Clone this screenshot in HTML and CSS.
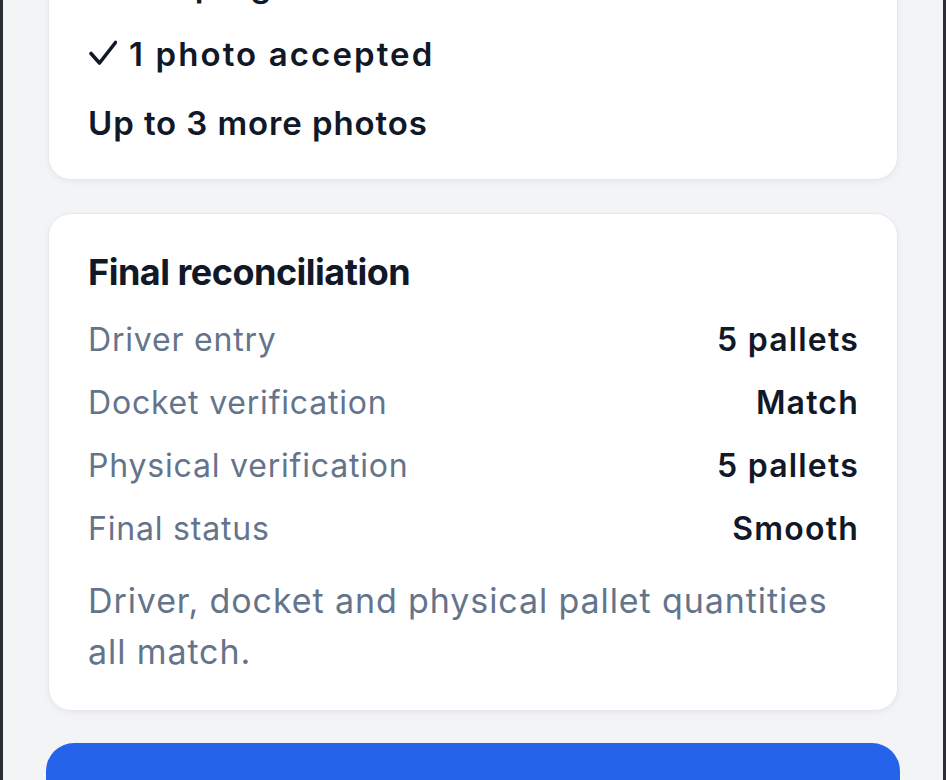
FILE: index.html
```html
<!DOCTYPE html>
<html lang="en">
<head>
<meta charset="utf-8">
<title>Final reconciliation</title>
<link rel="stylesheet" href="styles.css">
</head>
<body>
<div class="frame">
  <main class="screen">
    <div class="stack">
      <section class="card card-photos">
        <p class="line">Photo progress</p>
        <p class="line line-ok"><svg class="tick" viewBox="0 0 28 26" width="28" height="26" aria-hidden="true"><path d="M2 13.5 L10.5 23 L26.5 2.5" fill="none" stroke="#111827" stroke-width="3.6" stroke-linecap="round" stroke-linejoin="round"/></svg>1 photo accepted</p>
        <p class="line">Up to 3 more photos</p>
      </section>

      <section class="card card-recon">
        <h2 class="title">Final reconciliation</h2>
        <div class="rows">
          <div class="row"><span class="label">Driver entry</span><span class="value">5 pallets</span></div>
          <div class="row"><span class="label">Docket verification</span><span class="value">Match</span></div>
          <div class="row"><span class="label">Physical verification</span><span class="value">5 pallets</span></div>
          <div class="row"><span class="label">Final status</span><span class="value">Smooth</span></div>
        </div>
        <p class="note">Driver, docket and physical pallet quantities all match.</p>
      </section>

      <button class="primary" type="button">Complete delivery</button>
    </div>
  </main>
</div>
</body>
</html>
```

FILE: styles.css
```css
* { box-sizing: border-box; }

html, body {
  margin: 0;
  padding: 0;
  height: 100%;
}

body {
  background: #2a2d36;
  font-family: Inter, "Noto Sans", "Liberation Sans", sans-serif;
  color: #111827;
  overflow: hidden;
}

.frame {
  height: 780px;
  padding: 0 3px;
}

.screen {
  height: 100%;
  background: #f3f4f6;
  padding: 0 43px;
  overflow: hidden;
}

.stack {
  display: flex;
  flex-direction: column;
  gap: 33px;
  margin-top: -74px;
}

.card {
  background: #ffffff;
  border: 1px solid #e6e8ec;
  border-radius: 23px;
  box-shadow: 0 2px 6px rgba(15, 23, 42, 0.05);
  margin: 0 2px;
  padding: 0 38px 0 39px;
}

.card-photos {
  padding-top: 34px;
  padding-bottom: 32px;
  display: flex;
  flex-direction: column;
  gap: 21px;
}

.line {
  margin: 0;
  height: 48px;
  font-size: 33px;
  line-height: 48px;
  font-weight: 600;
  color: #111827;
  letter-spacing: 0.9px;
}

.line-ok {
  display: flex;
  align-items: center;
  gap: 12px;
  letter-spacing: 2.1px;
}

.tick {
  flex: none;
  display: block;
  margin-left: 1px;
  margin-top: -2px;
}

.card-recon {
  padding-top: 34px;
  padding-bottom: 33px;
}

.title {
  margin: 0 0 20px;
  font-size: 36px;
  line-height: 48px;
  font-weight: 700;
  color: #111827;
  letter-spacing: -0.5px;
}

.rows {
  display: flex;
  flex-direction: column;
  gap: 15px;
}

.row {
  display: flex;
  justify-content: space-between;
  align-items: center;
  font-size: 32px;
  line-height: 48px;
}

.label {
  color: #64748b;
  font-weight: 400;
  letter-spacing: 0.8px;
}

.value {
  color: #111827;
  font-weight: 600;
  letter-spacing: 1.2px;
}

.note {
  margin: 22px 0 0;
  font-size: 34px;
  line-height: 51px;
  color: #64748b;
  letter-spacing: 0.9px;
}

.primary {
  margin-top: -1px;
  display: block;
  width: 100%;
  height: 112px;
  border: none;
  border-radius: 28px;
  background: #2563eb;
  color: #ffffff;
  font-family: inherit;
  font-size: 34px;
  font-weight: 600;
}
```
